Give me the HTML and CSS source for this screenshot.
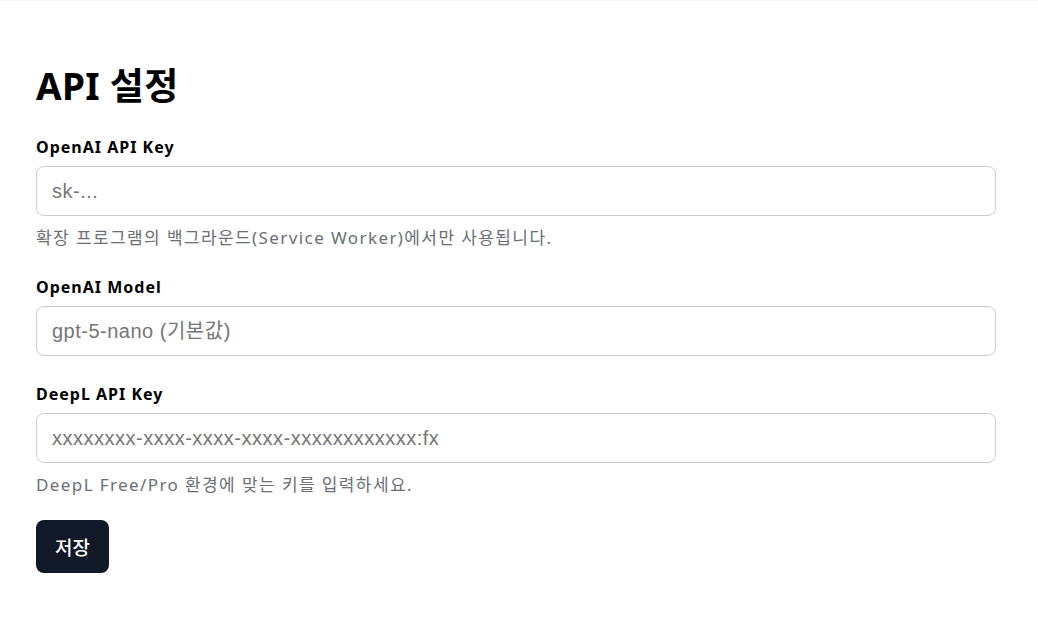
FILE: index.html
```html
<!DOCTYPE html>
<html lang="ko">
<head>
<meta charset="utf-8">
<title>API 설정</title>
<link rel="stylesheet" href="styles.css">
</head>
<body>
<main class="page">
  <h1 class="title">API 설정</h1>
  <form class="form">
    <div class="field">
      <label class="label" for="openai-key">OpenAI API Key</label>
      <input class="input" id="openai-key" type="text" placeholder="sk-...">
      <p class="help">확장 프로그램의 백그라운드(Service Worker)에서만 사용됩니다.</p>
    </div>
    <div class="field">
      <label class="label" for="openai-model">OpenAI Model</label>
      <input class="input" id="openai-model" type="text" placeholder="gpt-5-nano (기본값)">
    </div>
    <div class="field">
      <label class="label" for="deepl-key">DeepL API Key</label>
      <input class="input" id="deepl-key" type="text" placeholder="xxxxxxxx-xxxx-xxxx-xxxx-xxxxxxxxxxxx:fx">
      <p class="help">DeepL Free/Pro 환경에 맞는 키를 입력하세요.</p>
    </div>
    <div class="actions">
      <button class="button" type="button">저장</button>
    </div>
  </form>
</main>
</body>
</html>
```

FILE: styles.css
```css
html, body {
  margin: 0;
  padding: 0;
  background: #ffffff;
}
body {
  border-top: 1px solid #f4f4ee;
  font-family: "Noto Sans", "Noto Sans CJK KR", sans-serif;
  color: #000;
}
.page {
  padding: 62px 36px 40px;
  max-width: 960px;
}
.title {
  margin: 0 0 27px;
  font-family: "Noto Sans", "Noto Sans CJK KR", sans-serif;
  font-size: 37px;
  line-height: 46px;
  font-weight: 700;
  letter-spacing: 0.3px;
}
.form {
  display: flex;
  flex-direction: column;
}
.field {
  display: flex;
  flex-direction: column;
  margin-bottom: 27px;
}
.label {
  font-size: 16px;
  line-height: 22px;
  font-weight: 700;
  letter-spacing: 1px;
  margin-bottom: 8px;
}
.input {
  box-sizing: border-box;
  width: 960px;
  height: 50px;
  border: 1px solid #cccccc;
  border-radius: 8px;
  padding: 0 15px;
  font-family: "Liberation Sans", Arial, "Noto Sans CJK KR", sans-serif;
  font-size: 20px;
  letter-spacing: 0.5px;
  color: #000;
  outline: none;
}
.input::placeholder {
  color: #767676;
}
.help {
  margin: 10px 0 -1px;
  font-size: 17px;
  line-height: 24px;
  letter-spacing: 1.4px;
  color: #6b6f76;
}
.actions {
  margin-top: -3px;
}
.button {
  height: 53px;
  padding: 0 19px;
  background: #111827;
  color: #ffffff;
  border: none;
  border-radius: 8px;
  font-family: "Noto Sans CJK KR", sans-serif;
  font-size: 19px;
  font-weight: 500;
}
```
